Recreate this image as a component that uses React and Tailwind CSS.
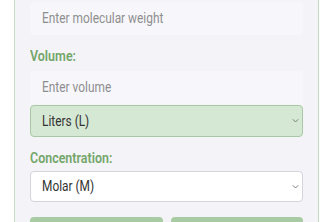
export default function App() {
  const font = { fontFamily: "Roboto, 'Liberation Sans', sans-serif" };

  const Chevron = () => (
    <svg className="absolute right-[3px] top-1/2 -translate-y-1/2" width="7" height="5" viewBox="0 0 7 5" fill="none">
      <path d="M0.8 0.8l2.7 2.7 2.7-2.7" stroke="#7d7d7d" strokeWidth="1" />
    </svg>
  );

  const Text = ({ children, className = "" }) => (
    <span className={`inline-block origin-left scale-x-[0.85] whitespace-nowrap ${className}`}>{children}</span>
  );

  return (
    <div className="h-[222px] w-[333px] overflow-hidden bg-white px-[14px]" style={font}>
      <div className="-mt-[10px] border border-[#c3dbbf] bg-[#f3f3f8] px-[15px] pt-[11px] pb-[20px]">
        <div className="flex h-[33px] items-center rounded bg-[#f7f7fb] pl-[12px] text-[14px] text-[#8e8e8e]">
          <Text>Enter molecular weight</Text>
        </div>

        <div className="mt-[11px] h-[20px] text-[14px] font-semibold leading-[20px] text-[#74a66a]">
          <span className="inline-block origin-left scale-x-[0.89] whitespace-nowrap">Volume:</span>
        </div>

        <div className="mt-[5px] flex h-[33px] items-center rounded bg-[#f7f7fb] pl-[12px] text-[14px] text-[#8e8e8e]">
          <Text>Enter volume</Text>
        </div>

        <div className="relative mt-[1px] flex h-[32px] items-center rounded-[4px] border border-[#a9c9a4] bg-[#d5e8d3] pl-[11px] text-[14px] text-[#333]">
          <Text>Liters (L)</Text>
          <Chevron />
        </div>

        <div className="mt-[11px] h-[20px] text-[14px] font-semibold leading-[20px] text-[#74a66a]">
          <span className="inline-block origin-left scale-x-[0.89] whitespace-nowrap">Concentration:</span>
        </div>

        <div className="relative mt-[3px] flex h-[31px] items-center rounded-[4px] border border-[#d4d4dc] bg-white pl-[11px] text-[14px] text-[#333]">
          <Text>Molar (M)</Text>
          <Chevron />
        </div>

        <div className="mt-[15px] grid grid-cols-2 gap-[8px]">
          <button className="h-[34px] rounded-[4px] bg-[#a8cba3]"></button>
          <button className="h-[34px] rounded-[4px] bg-[#a8cba3]"></button>
        </div>
      </div>
    </div>
  );
}
